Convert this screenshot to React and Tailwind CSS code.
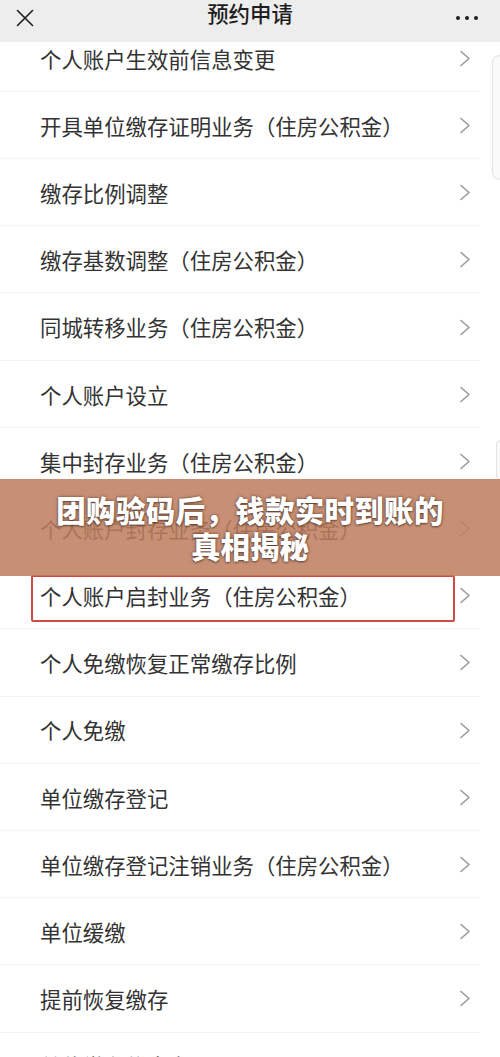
import React from "react";

const items = [
  "个人账户生效前信息变更",
  "开具单位缴存证明业务（住房公积金）",
  "缴存比例调整",
  "缴存基数调整（住房公积金）",
  "同城转移业务（住房公积金）",
  "个人账户设立",
  "集中封存业务（住房公积金）",
  "个人账户封存业务（住房公积金）",
  "个人账户启封业务（住房公积金）",
  "个人免缴恢复正常缴存比例",
  "个人免缴",
  "单位缴存登记",
  "单位缴存登记注销业务（住房公积金）",
  "单位缓缴",
  "提前恢复缴存",
  "单位缴存信息变更",
];

function Chevron() {
  return (
    <svg width="12" height="17" viewBox="0 0 12 17" className="shrink-0">
      <polyline points="2,1.5 10,8.5 2,15.5" fill="none" stroke="#9a9a9a" strokeWidth="1.6" strokeLinecap="round" strokeLinejoin="round" />
    </svg>
  );
}

function Row({ label, highlighted }) {
  return (
    <div className="relative h-[67.2px] flex items-center pl-[40px] pr-[29px]">
      <span className="flex-1 text-[21.4px] leading-none text-[#333]">{label}</span>
      <Chevron />
      <div className="absolute left-0 right-[20px] bottom-0 h-px bg-[#f3f3f3]" />
      {highlighted && (
        <div className="absolute left-[31px] right-[45px] top-[13px] bottom-[7px] border-2 border-[#cc4b45] rounded-[2px]" />
      )}
    </div>
  );
}

export default function App() {
  return (
    <div className="relative w-[500px] h-[1057px] overflow-hidden bg-white font-['Noto_Sans_CJK_SC','Noto_Sans',sans-serif]">
      <header className="relative z-10 h-[42px] bg-[#ededed] flex items-center justify-between pl-[16px] pr-[22px]">
        <svg width="18" height="18" viewBox="0 0 18 18" className="-mt-[7px]">
          <path d="M1.5 1.5 L16.5 16.5 M16.5 1.5 L1.5 16.5" stroke="#1e1e1e" strokeWidth="1.6" strokeLinecap="round" />
        </svg>
        <h1 className="absolute left-0 right-0 top-0 text-center text-[21.4px] leading-[26px] font-medium text-[#1e1e1e]">预约申请</h1>
        <div className="flex gap-[5px] -mt-[7px]">
          <span className="w-[4px] h-[4px] rounded-full bg-[#1e1e1e]" />
          <span className="w-[4px] h-[4px] rounded-full bg-[#1e1e1e]" />
          <span className="w-[4px] h-[4px] rounded-full bg-[#1e1e1e]" />
        </div>
      </header>

      <div className="-mt-[17.3px]">
        {items.map((label, i) => (
          <Row key={i} label={label} highlighted={i === 8} />
        ))}
      </div>

      {/* side scroll handles */}
      <div className="absolute top-[55px] left-[492px] w-[12px] h-[125px] rounded-l-[8px] border border-[#e4e4e4] bg-[#fafafa] shadow-[0_0_3px_rgba(0,0,0,0.06)]" />
      <div className="absolute top-[440px] left-[496px] w-[6px] h-[40px] rounded-l-[4px] border border-[#e4e4e4] bg-[#fafafa]" />

      {/* headline banner */}
      <div className="absolute left-0 right-0 top-[479px] h-[97px] bg-[rgba(190,126,94,0.86)] flex flex-col items-center justify-center pb-[2px]">
        <p className="text-[29.5px] leading-[36px] font-black text-white tracking-[0.3px] [text-shadow:0_0_3px_rgba(60,30,20,0.7),0_1px_2px_rgba(0,0,0,0.4)]">
          团购验码后，钱款实时到账的
        </p>
        <p className="text-[29.5px] leading-[36px] font-black text-white [text-shadow:0_0_3px_rgba(60,30,20,0.7),0_1px_2px_rgba(0,0,0,0.4)]">
          真相揭秘
        </p>
      </div>
    </div>
  );
}
